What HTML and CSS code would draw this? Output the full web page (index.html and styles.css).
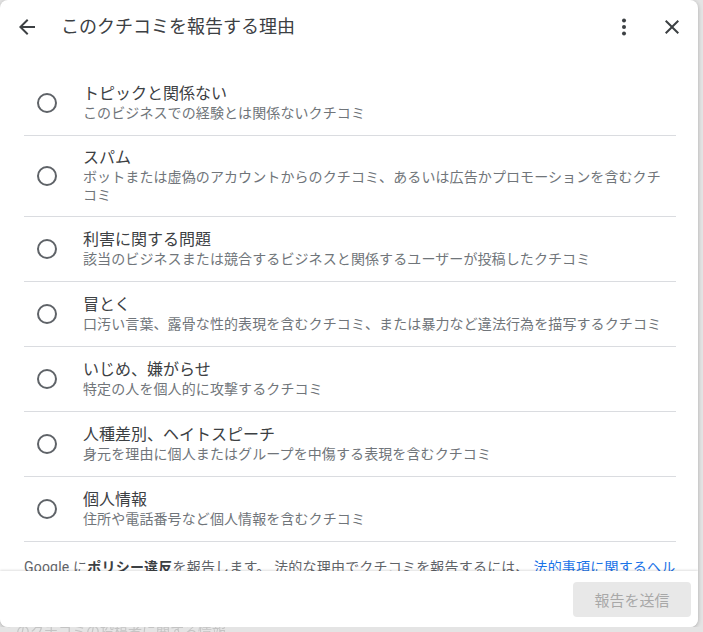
FILE: index.html
```html
<!DOCTYPE html>
<html lang="ja">
<head>
    <meta charset="UTF-8">
    <title>クチコミを報告</title>
    <link rel="stylesheet" href="styles.css">
</head>
<body>
    <div class="backdrop">
        <p class="behind">このクチコミの投稿者に関する情報</p>
    </div>

    <!-- report dialog -->
    <div class="dialog">
        <div class="header">
            <span class="icon-btn back">
                <svg width="24" height="24" viewBox="0 0 24 24"><path d="M20 11H7.83l5.59-5.59L12 4l-8 8 8 8 1.41-1.41L7.83 13H20v-2z" fill="#3c4043"/></svg>
            </span>
            <h1 class="title">このクチコミを報告する理由</h1>
            <span class="icon-btn more">
                <svg width="24" height="24" viewBox="0 0 24 24"><circle cx="12" cy="5.5" r="2" fill="#3c4043"/><circle cx="12" cy="12" r="2" fill="#3c4043"/><circle cx="12" cy="18.5" r="2" fill="#3c4043"/></svg>
            </span>
            <span class="icon-btn close">
                <svg width="24" height="24" viewBox="0 0 24 24"><path d="M19 6.41L17.59 5 12 10.59 6.41 5 5 6.41 10.59 12 5 17.59 6.41 19 12 13.41 17.59 19 19 17.59 13.41 12z" fill="#3c4043"/></svg>
            </span>
        </div>

        <div class="content">
            <ul class="options">
                <li class="option">
                    <span class="radio"><span class="ring"></span></span>
                    <div class="text">
                        <div class="name">トピックと関係ない</div>
                        <div class="desc">このビジネスでの経験とは関係ないクチコミ</div>
                    </div>
                </li>
                <li class="option">
                    <span class="radio"><span class="ring"></span></span>
                    <div class="text">
                        <div class="name">スパム</div>
                        <div class="desc">ボットまたは虚偽のアカウントからのクチコミ、あるいは広告かプロモーションを含むクチコミ</div>
                    </div>
                </li>
                <li class="option">
                    <span class="radio"><span class="ring"></span></span>
                    <div class="text">
                        <div class="name">利害に関する問題</div>
                        <div class="desc">該当のビジネスまたは競合するビジネスと関係するユーザーが投稿したクチコミ</div>
                    </div>
                </li>
                <li class="option">
                    <span class="radio"><span class="ring"></span></span>
                    <div class="text">
                        <div class="name">冒とく</div>
                        <div class="desc">口汚い言葉、露骨な性的表現を含むクチコミ、または暴力など違法行為を描写するクチコミ</div>
                    </div>
                </li>
                <li class="option">
                    <span class="radio"><span class="ring"></span></span>
                    <div class="text">
                        <div class="name">いじめ、嫌がらせ</div>
                        <div class="desc">特定の人を個人的に攻撃するクチコミ</div>
                    </div>
                </li>
                <li class="option">
                    <span class="radio"><span class="ring"></span></span>
                    <div class="text">
                        <div class="name">人種差別、ヘイトスピーチ</div>
                        <div class="desc">身元を理由に個人またはグループを中傷する表現を含むクチコミ</div>
                    </div>
                </li>
                <li class="option">
                    <span class="radio"><span class="ring"></span></span>
                    <div class="text">
                        <div class="name">個人情報</div>
                        <div class="desc">住所や電話番号など個人情報を含むクチコミ</div>
                    </div>
                </li>
            </ul>
            <p class="note">Google に<b>ポリシー違反</b>を報告します。 法的な理由でクチコミを報告するには、 <a href="#">法的事項に関するヘルプ</a>をご覧ください。</p>
        </div>

        <div class="footer">
            <button class="submit" disabled>報告を送信</button>
        </div>
    </div>
</body>
</html>
```

FILE: styles.css
```css
body {
    margin: 0;
    background-color: #e4e4e4;
    font-family: Roboto, "Noto Sans CJK JP", sans-serif;
    color: #3c4043;
    overflow: hidden;
}

.backdrop {
    position: absolute;
    left: 0;
    top: 0;
    width: 703px;
    height: 632px;
}

.behind {
    position: absolute;
    left: 2px;
    top: 620px;
    margin: 0;
    font-size: 14px;
    color: #c4c4c4;
    filter: blur(0.6px);
}

.dialog {
    position: relative;
    width: 698px;
    height: 627px;
    background-color: #fff;
    border-radius: 8px;
    box-shadow: 0 1px 4px rgba(0, 0, 0, 0.25);
    display: flex;
    flex-direction: column;
    overflow: hidden;
}

/* header */

.header {
    height: 54px;
    display: flex;
    align-items: center;
    padding: 0 14px 0 15px;
    flex-shrink: 0;
}

.icon-btn {
    width: 24px;
    height: 24px;
    display: flex;
}

.title {
    flex: 1;
    margin: 0 0 0 22px;
    font-size: 18px;
    font-weight: 400;
    color: #3c4043;
    line-height: 24px;
}

.more {
    margin-right: 24px;
}

/* options */

.content {
    flex: 1;
    overflow: hidden;
    padding: 17px 22px 0 24px;
}

.options {
    list-style: none;
    margin: 0;
    padding: 0;
}

.option {
    display: flex;
    align-items: center;
    min-height: 64px;
    box-sizing: border-box;
    padding: 12px 8px 12px 3px;
    border-bottom: 1px solid #dadce0;
}

.option:last-child {
    min-height: 65px;
}

.radio {
    width: 40px;
    height: 40px;
    display: flex;
    align-items: center;
    justify-content: center;
    flex-shrink: 0;
    margin-right: 16px;
}

.ring {
    width: 16px;
    height: 16px;
    border: 2px solid #5f6368;
    border-radius: 50%;
}

.text {
    flex: 1;
}

.name {
    font-size: 16px;
    line-height: 20px;
    color: #3c4043;
}

.desc {
    font-size: 14px;
    line-height: 18px;
    letter-spacing: 0.1px;
    color: #70757a;
}

.note {
    margin: 15px 0 0;
    font-size: 14px;
    line-height: 20px;
    letter-spacing: 0.2px;
    color: #5f6368;
}

.note b {
    color: #3c4043;
}

.note a {
    color: #1a73e8;
    text-decoration: none;
}

/* footer */

.footer {
    height: 56px;
    flex-shrink: 0;
    display: flex;
    align-items: center;
    justify-content: flex-end;
    padding-right: 7px;
    background-color: #fff;
    box-shadow: 0 -1px 2px rgba(0, 0, 0, 0.12);
    position: relative;
}

.submit {
    width: 118px;
    height: 35px;
    border: 0;
    border-radius: 4px;
    background-color: #e8e8e8;
    color: #a8a8a8;
    font-family: Roboto, "Noto Sans CJK JP", sans-serif;
    font-size: 15px;
}
```
